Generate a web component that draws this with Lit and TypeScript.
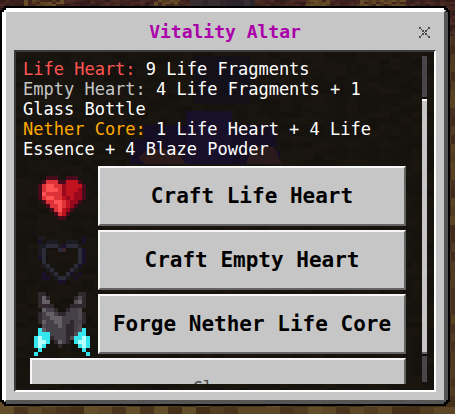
import { LitElement, html, svg, css } from "lit";
import { customElement, property } from "lit/decorators.js";

type Palette = Record<string, string>;

const HEART = [
  "", "", "",
  "....ddd..ddd....",
  "...dmmmddrrrd...",
  "..dmllmmsrrrrd..",
  "..dmlllmsrrrsd..",
  "..dlmmmmsrrssd..",
  "..dmllmmrsrssd..",
  "...dmmllmrssd...",
  "....dmmlmrsd....",
  ".....dmlrsd.....",
  "......dmrd......",
  ".......dd.......",
];
const HEART_COLORS: Palette = { d: "#480b1c", m: "#dd3338", l: "#ff5252", r: "#c1131f", s: "#99091b" };

const EMPTY = [
  "", "",
  "..ff.........p..",
  "..p.fff..fff.p..",
  "..ffgggfpgggf...",
  "..fg...gq...gp..",
  "..fg........gp..",
  "..pg........gp..",
  "...g........gp..",
  "...fg......gp...",
  "....fg....gf....",
  "...p.fg..gp.p...",
  "...pp.fggf.p....",
  ".......pp.......",
];
const EMPTY_COLORS: Palette = { f: "#1b1a20", g: "#2b2c37", p: "#1a1029", q: "#35222a" };

const ARMOR = [
  "..dd........dd..",
  "..dgd......ded..",
  "..dgg......egd..",
  "..dddd....dddd..",
  "...gbbd..dbbe...",
  "..dbggbddbbbed..",
  "..dbbgggbbbbed..",
  "..dgbbggbbdbbd..",
  "...ebbbgbddbe...",
  "..cgbbbbbddbec..",
  "..cccbbbbddecc..",
  ".cwccdbbbdeccwc.",
  ".cwwc.dgbd.cwwc.",
  ".cwc...d....cwc.",
  "..c..........c..",
  ".c............c.",
];
const ARMOR_COLORS: Palette = { d: "#30282d", e: "#524b52", g: "#646066", b: "#464148", c: "#35e6ee", w: "#b5ffff" };

const CROSS = ["x.....x", ".x...x.", "..x.x..", "...x...", "..x.x..", ".x...x.", "x.....x"];

/** Draws a small sprite, one unit square for each letter of the map. */
const sprite = (rows: string[], colors: Palette, size: number) => svg`
  <svg viewBox="0 0 ${size} ${size}" shape-rendering="crispEdges" aria-hidden="true">
    ${rows.flatMap((row, y) =>
      [...row].map((c, x) =>
        colors[c] ? svg`<rect x=${x} y=${y} width="1" height="1" fill=${colors[c]}></rect>` : null
      )
    )}
  </svg>`;

/** Fills an area with blocks whose shades are picked by a seeded generator. */
function blocks(x0: number, y0: number, w: number, h: number, bw: number, bh: number, shades: string[], seed: number) {
  const out = [];
  let s = seed;
  for (let y = y0; y < y0 + h; y += bh) {
    for (let x = x0; x < x0 + w; x += bw) {
      s = (s * 16807) % 2147483647;
      const fill = shades[Math.floor(((s / 127) % 1) * shades.length)];
      out.push(svg`<rect x=${x} y=${y} width=${Math.min(bw, x0 + w - x)} height=${Math.min(bh, y0 + h - y)} fill=${fill}></rect>`);
    }
  }
  return out;
}

const NETHER = ["#3a201d", "#45261f", "#331b1a", "#4b2b25", "#3d221f"];
const GOLD = ["#5e4524", "#513a20", "#45261f", "#674e2a"];
const PLANKS = ["#523d20", "#5e4726", "#49341d", "#644d29", "#443019"];

const world = html`<svg class="world" viewBox="0 0 455 414" preserveAspectRatio="none" shape-rendering="crispEdges" aria-hidden="true">
  ${blocks(0, 0, 455, 10, 5, 2, NETHER, 7001)}
  ${blocks(24, 0, 40, 6, 4, 2, GOLD, 5003)}
  ${blocks(154, 0, 26, 6, 4, 2, GOLD, 9001)}
  ${blocks(190, 0, 65, 8, 6, 8, ["#30272d", "#382d33", "#2c242b"], 3011)}
  ${blocks(306, 0, 24, 6, 4, 2, GOLD, 1301)}
  ${blocks(356, 0, 50, 6, 4, 2, GOLD, 1511)}
  ${blocks(446, 10, 9, 60, 3, 3, NETHER, 2111)}
  ${blocks(446, 36, 9, 364, 5, 9, ["#46301f", "#513a22", "#3f2a1c", "#5a4120"], 2309)}
  ${blocks(0, 400, 455, 14, 14, 7, PLANKS, 3109)}
</svg>`;

const gloom = html`<svg class="gloom" viewBox="0 0 418 338" preserveAspectRatio="none" shape-rendering="crispEdges" aria-hidden="true">
  ${blocks(0, 0, 418, 338, 11, 6, ["#17130e", "#16120d", "#18140e", "#15110c", "#1a150e"], 4111)}
  <rect x="178" y="4" width="56" height="48" fill="#13101a"></rect>
  <path d="M170 59h46v14h44v26h4v13H114V87h14V73h42z" fill="#150e22"></path>
  <path d="M132 97h28l10 15h-40l-8-6z" fill="#2c1a1b"></path>
  <path d="M236 95h22l8 17h-36z" fill="#291b1d"></path>
  <path d="M170 59h46v53h-46z" fill="#180f2a"></path>
</svg>`;

@customElement("craft-row")
export class CraftRow extends LitElement {
  @property() label = "";
  @property({ attribute: false }) rows: string[] = [];
  @property({ attribute: false }) colors: Palette = {};

  static styles = css`
    :host { display: grid; grid-template-columns: 64px 1fr; column-gap: 4px; height: 64px; }
    svg { display: block; width: 64px; height: 64px; }
    button {
      margin: 2px 0;
      padding: 0;
      border: 2px solid;
      border-color: #f7f7f7 #636363 #636363 #f7f7f7;
      border-radius: 0;
      background: #c6c6c6;
      color: #000;
      font: bold 21px/24px "DejaVu Sans Mono", "Liberation Mono", monospace;
      white-space: nowrap;
    }
  `;

  render() {
    return html`${sprite(this.rows, this.colors, 16)}<button type="button">${this.label}</button>`;
  }
}

@customElement("app-root")
export class AppRoot extends LitElement {
  static styles = css`
    :host {
      display: flex;
      box-sizing: border-box;
      height: 100vh;
      padding: 6px 5px 8px 0;
      position: relative;
      overflow: hidden;
      background: #3f2a1c;
      font-family: "DejaVu Sans Mono", "Liberation Mono", monospace;
    }
    .world, .gloom { position: absolute; inset: 0; width: 100%; height: 100%; }
    .panel, .face {
      clip-path: polygon(
        0 4px, 2px 4px, 2px 2px, 4px 2px, 4px 0,
        calc(100% - 4px) 0, calc(100% - 4px) 2px, calc(100% - 2px) 2px, calc(100% - 2px) 4px, 100% 4px,
        100% calc(100% - 4px), calc(100% - 2px) calc(100% - 4px), calc(100% - 2px) calc(100% - 2px), calc(100% - 4px) calc(100% - 2px), calc(100% - 4px) 100%,
        4px 100%, 4px calc(100% - 2px), 2px calc(100% - 2px), 2px calc(100% - 4px), 0 calc(100% - 4px)
      );
    }
    .panel { display: flex; flex: 1; min-width: 0; padding: 2px; background: #000; position: relative; }
    .face {
      display: flex;
      flex-direction: column;
      flex: 1;
      min-width: 0;
      border: 4px solid;
      border-color: #fff #555 #555 #fff;
      background: #c6c6c6;
    }
    header {
      display: grid;
      grid-template-columns: 1fr auto 1fr;
      align-items: center;
      box-sizing: border-box;
      height: 38px;
      padding: 2px 14px 0;
    }
    h1 { grid-column: 2; margin: 0; color: #aa00aa; font-size: 18px; line-height: 24px; }
    .dismiss { justify-self: end; padding: 0; border: 0; background: none; }
    .dismiss svg { display: block; width: 11px; height: 11px; }
    .body {
      display: flex;
      flex: 1;
      min-height: 0;
      margin: 0 8px 8px;
      position: relative;
      border: 2px solid;
      border-color: #3b3b3b #fff #fff #3b3b3b;
      background: #16120d;
    }
    .view { flex: 1; min-width: 0; margin-bottom: 6px; padding-top: 7px; overflow: hidden; position: relative; }
    .recipes { margin: 0 4px 5px 7px; color: #fff; font-size: 17px; line-height: 20px; }
    .recipes p { margin: 0; }
    .life { color: #ff5555; }
    .empty { color: #c6c6c6; }
    .nether { color: #ffaa00; }
    .actions { display: flex; flex-direction: column; padding: 0 16px 0 14px; }
    .close {
      height: 60px;
      margin: 2px 0;
      padding: 0;
      border: 2px solid;
      border-color: #f7f7f7 #636363 #636363 #f7f7f7;
      border-radius: 0;
      background: #c6c6c6;
      color: #4c4c4c;
      font: 17px/20px "DejaVu Sans Mono", "Liberation Mono", monospace;
    }
    .bar { display: flex; flex-direction: column; width: 5px; margin: 4px 7px 8px 0; position: relative; background: #48444a; }
    .before { flex: 44; }
    .thumb { flex: 254; background: #c6c6c6; border-top: 2px solid #fff; border-bottom: 2px solid #636363; box-shadow: 0 -2px #110e0b, 0 2px #110e0b; }
    .after { flex: 28; }
  `;

  render() {
    return html`
      ${world}
      <main class="panel">
        <div class="face">
          <header>
            <h1>Vitality Altar</h1>
            <button class="dismiss" type="button" aria-label="Dismiss">${sprite(CROSS, { x: "#4c4c4c" }, 7)}</button>
          </header>
          <div class="body">
            ${gloom}
            <div class="view">
              <div class="recipes">
                <p><span class="life">Life Heart:</span> 9 Life Fragments</p>
                <p><span class="empty">Empty Heart:</span> 4 Life Fragments + 1 Glass Bottle</p>
                <p><span class="nether">Nether Core:</span> 1 Life Heart + 4 Life Essence + 4 Blaze Powder</p>
              </div>
              <div class="actions">
                <craft-row label="Craft Life Heart" .rows=${HEART} .colors=${HEART_COLORS}></craft-row>
                <craft-row label="Craft Empty Heart" .rows=${EMPTY} .colors=${EMPTY_COLORS}></craft-row>
                <craft-row label="Forge Nether Life Core" .rows=${ARMOR} .colors=${ARMOR_COLORS}></craft-row>
                <button class="close" type="button">Close</button>
              </div>
            </div>
            <div class="bar" aria-hidden="true">
              <div class="before"></div>
              <div class="thumb"></div>
              <div class="after"></div>
            </div>
          </div>
        </div>
      </main>
    `;
  }
}
